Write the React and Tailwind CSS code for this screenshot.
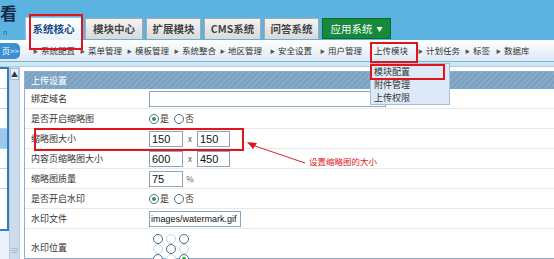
import React from "react";

const font = { fontFamily: '"Noto Sans CJK SC", "Liberation Sans", sans-serif' };

const tabs = [
  { t: "系统核心", w: 57, active: true },
  { t: "模块中心", w: 58 },
  { t: "扩展模块", w: 55 },
  { t: "CMS系统", w: 57 },
  { t: "问答系统", w: 55 },
];

const navItems = [
  ["系统配置", 47],
  ["菜单管理", 47],
  ["模板管理", 47],
  ["系统整合", 46],
  ["地区管理", 50],
  ["安全设置", 50],
  ["用户管理", 50],
];

function Radio({ checked, light }) {
  return (
    <span
      className={
        "inline-flex items-center justify-center w-[10px] h-[10px] rounded-full border bg-white " +
        (light ? "border-[#c8d4de]" : "border-[#4a6a8a]")
      }
    >
      {checked && <span className="w-[4px] h-[4px] rounded-full bg-[#22a33a]" />}
    </span>
  );
}

function Input({ w, v, small }) {
  return (
    <div
      className={
        "h-[16px] border border-[#8aa6c0] bg-white leading-[14px] text-[#111] whitespace-nowrap " +
        (small ? "text-[9px] pl-[1px] pr-[3px]" : "text-[11px] pl-[2px]")
      }
      style={{ width: w, fontFamily: '"Liberation Sans", Arial, sans-serif' }}
    >
      {v}
    </div>
  );
}

function Row({ label, children, h = 20 }) {
  return (
    <div className="flex border-b border-[#e8e8e8]" style={{ height: h }}>
      <div className="w-[124px] pl-[6px] flex items-center text-[9px] text-[#333] whitespace-nowrap">{label}</div>
      <div className="flex-1 flex items-center">{children}</div>
    </div>
  );
}

function Arrow() {
  return <span className="text-[5px] mr-[3px] text-[#555]">▶</span>;
}

export default function App() {
  return (
    <div className="relative w-[554px] h-[259px] overflow-hidden bg-white" style={font}>
      {/* header */}
      <div className="h-[40px] bg-[#5db3df] flex items-end">
        <div className="w-[25px] h-[40px] relative">
          <div className="absolute left-0 top-[4px] text-[17px] font-bold text-[#13294a] leading-[17px]">看</div>
          <div className="absolute left-[3px] top-[28px] text-[7px] text-[#1d5fa5] leading-[8px]">n</div>
        </div>
        <div className="flex gap-[3px] items-end">
          {tabs.map((t) => (
            <div
              key={t.t}
              className={
                "flex items-center justify-center text-[10.5px] font-bold border border-b-0 whitespace-nowrap " +
                (t.active
                  ? "h-[23px] bg-gradient-to-b from-[#ffffff] to-[#e6f1fa] border-[#9cc3df] text-[#1a4a86]"
                  : "h-[21px] mb-[1px] bg-gradient-to-b from-[#f4f4f4] to-[#d9d9d9] border-[#a9a9a9] text-[#444]")
              }
              style={{ width: t.w }}
            >
              {t.t}
            </div>
          ))}
          <div className="h-[21px] mb-[1px] w-[69px] flex items-center justify-center gap-[4px] bg-[#16893a] border border-[#0d6a2b] text-white text-[10.5px] whitespace-nowrap">
            应用系统 <span className="text-[6px]">▼</span>
          </div>
        </div>
      </div>

      {/* nav bar */}
      <div className="h-[22px] bg-gradient-to-b from-[#ffffff] to-[#dde9f4] border-b border-[#7fb4d6] flex items-center text-[8.5px] text-[#333] whitespace-nowrap">
        <div className="w-[20px] h-[16px] bg-[#3b8fd3] rounded-r-[5px] text-white text-[8px] flex items-center justify-end pr-[1px] leading-none overflow-hidden whitespace-nowrap">
          页&gt;&gt;
        </div>
        <div className="flex items-center ml-[13px]">
          {navItems.map(([t, w]) => (
            <div key={t} className="flex items-center" style={{ width: w }}>
              <Arrow />
              {t}
            </div>
          ))}
          <div className="w-[48px] pl-[4px]">上传模块</div>
          <div className="flex items-center w-[47px]">
            <Arrow />计划任务
          </div>
          <div className="flex items-center w-[31px]">
            <Arrow />标签
          </div>
          <div className="flex items-center">
            <Arrow />数据库
          </div>
        </div>
      </div>
      <div className="h-[5px] bg-[#cfe6f3] border-b border-[#a8cfe4]" />

      {/* main */}
      <div className="flex h-[192px]">
        <div className="w-[9px] flex flex-col">
          <div className="h-[164px] bg-white border-2 border-l-0 border-[#2f7fc4] flex flex-col">
            {[0, 1, 2, 3, 4, 5].map((i) => (
              <div key={i} className={"h-[20px] border-b border-[#b9d3ea] " + (i === 3 ? "bg-[#9cc8ea]" : "")} />
            ))}
          </div>
          <div className="flex-1 bg-[#eaf3fa]" />
        </div>
        <div className="w-[11px] bg-[#cddcec] border-x border-[#b7c9dc] flex flex-col items-center">
          <div className="w-[9px] h-[12px] mt-[1px] bg-[#e8f0f8] border border-[#a9bdd2] text-[7px] leading-[10px] text-center text-[#335]">▲</div>
          <div className="flex-1" />
          <div className="text-[9px] text-[#8aa] leading-none mb-[4px]">≡</div>
        </div>
        <div className="w-[4px]" />
        <div className="flex-1 pt-[4px]">
          <div className="border border-[#8fb0cc] border-r-0 h-full">
            <div className="h-[17px] bg-[repeating-linear-gradient(135deg,#7aa1c3_0px,#7aa1c3_2px,#86abc9_2px,#86abc9_4px)] text-white text-[9px] leading-[17px] pl-[6px]">
              上传设置
            </div>
            <Row label="绑定域名">
              <Input w={237} v="" />
            </Row>
            <Row label="是否开启缩略图">
              <div className="flex items-center gap-[1px] text-[9px] text-[#333]">
                <Radio checked />是<span className="w-[3px]" />
                <Radio />否
              </div>
            </Row>
            <Row label="缩略图大小">
              <Input w={34} v="150" />
              <span className="text-[8px] w-[14px] text-center text-[#555]">x</span>
              <Input w={33} v="150" />
            </Row>
            <Row label="内容页缩略图大小">
              <Input w={34} v="600" />
              <span className="text-[8px] w-[14px] text-center text-[#555]">x</span>
              <Input w={33} v="450" />
            </Row>
            <Row label="缩略图质量">
              <Input w={34} v="75" />
              <span className="text-[8px] w-[14px] text-center text-[#555]">%</span>
            </Row>
            <Row label="是否开启水印">
              <div className="flex items-center gap-[1px] text-[9px] text-[#333]">
                <Radio checked />是<span className="w-[3px]" />
                <Radio />否
              </div>
            </Row>
            <Row label="水印文件">
              <Input v="images/watermark.gif" small />
            </Row>
            <Row label="水印位置" h={38}>
              <div className="grid grid-cols-3 gap-x-[3px] gap-y-[0px] pl-[4px] pt-[2px]">
                <Radio />
                <Radio light />
                <Radio />
                <Radio light />
                <Radio />
                <Radio light />
                <Radio />
                <Radio light />
                <Radio checked />
              </div>
            </Row>
          </div>
        </div>
      </div>

      {/* dropdown menu */}
      <div className="absolute left-[370px] top-[63px] w-[80px] h-[42px] bg-[#dde9f6] border border-[#a7c0d8] text-[9px] text-[#333] leading-[13px] pl-[3px] pt-[1px] whitespace-nowrap">
        <div>模块配置</div>
        <div>附件管理</div>
        <div>上传权限</div>
      </div>

      {/* annotations */}
      <div className="absolute left-[29px] top-[14px] w-[54px] h-[36px] border-2 border-[#e0141e]" />
      <div className="absolute left-[370px] top-[42px] w-[48px] h-[21px] border-2 border-[#e0141e]" />
      <div className="absolute left-[370px] top-[64px] w-[75px] h-[16px] border-2 border-[#e0141e]" />
      <div className="absolute left-[34px] top-[128px] w-[210px] h-[23px] border-2 border-[#e0141e]" />
      <svg className="absolute left-0 top-0" width="554" height="259">
        <line x1="252" y1="145" x2="305" y2="163" stroke="#d9232b" strokeWidth="1" />
        <polygon points="247,142 257,143 253,149" fill="#e0141e" />
      </svg>
      <div className="absolute left-[309px] top-[155px] text-[8.5px] text-[#e0141e] leading-[12px] whitespace-nowrap">设置缩略图的大小</div>
    </div>
  );
}
